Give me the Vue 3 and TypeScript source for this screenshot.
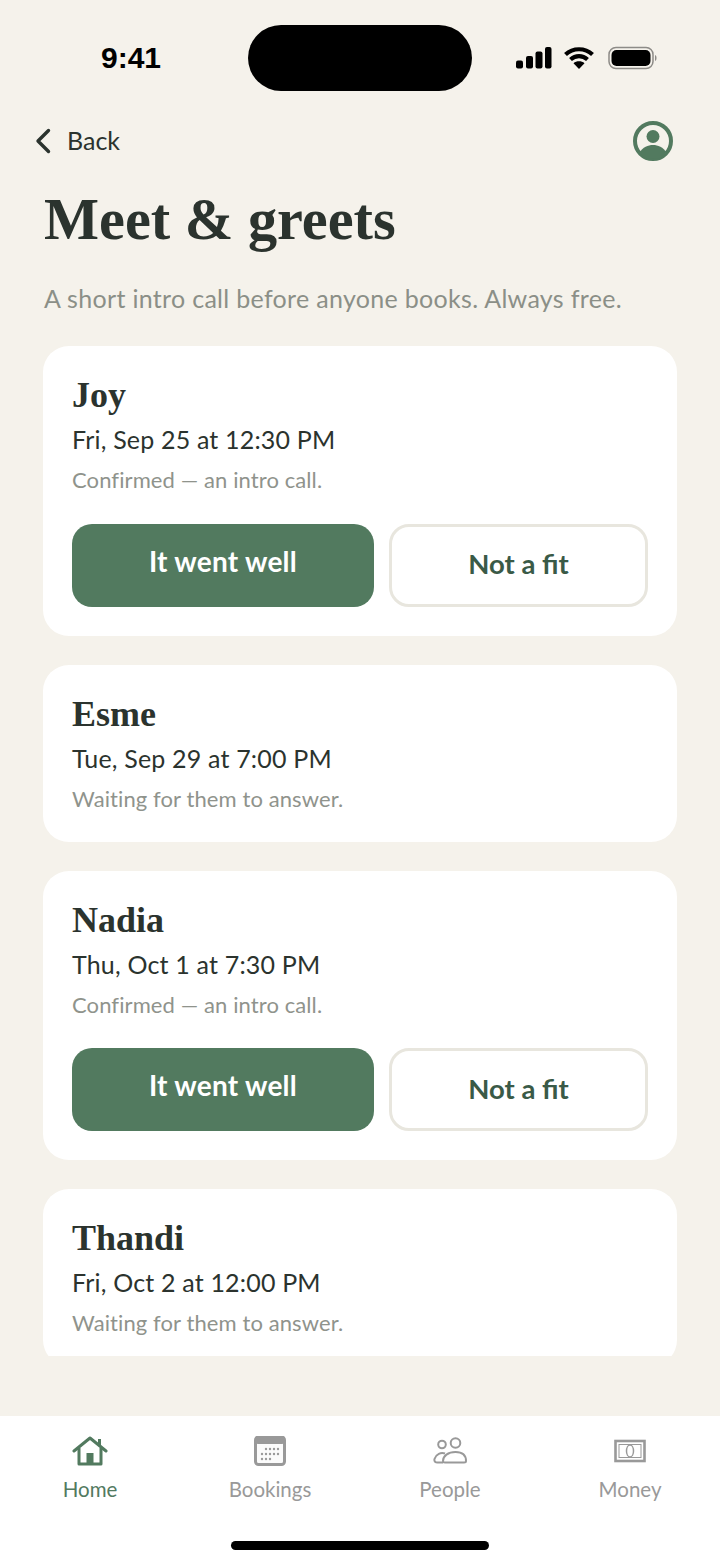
<script setup lang="ts">
interface Meet { name: string; when: string; note: string; confirmed: boolean }
const meets: Meet[] = [
  { name: 'Joy', when: 'Fri, Sep 25 at 12:30 PM', note: 'Confirmed — an intro call.', confirmed: true },
  { name: 'Esme', when: 'Tue, Sep 29 at 7:00 PM', note: 'Waiting for them to answer.', confirmed: false },
  { name: 'Nadia', when: 'Thu, Oct 1 at 7:30 PM', note: 'Confirmed — an intro call.', confirmed: true },
  { name: 'Thandi', when: 'Fri, Oct 2 at 12:00 PM', note: 'Waiting for them to answer.', confirmed: false },
]
</script>

<template>
  <div class="screen">
    <div class="status">
      <span class="time">9:41</span>
      <div class="island"></div>
      <div class="status-icons">
        <svg width="36" height="24" viewBox="0 0 36 24"><g fill="#000"><rect x="0" y="14.500" width="7" height="8" rx="2"/><rect x="10" y="10" width="7" height="12.500" rx="2"/><rect x="19.500" y="5.500" width="7" height="17" rx="2"/><rect x="29" y="1" width="6.500" height="21.500" rx="2"/></g></svg>
        <svg class="wifi" width="32" height="24" viewBox="0 0 32 24"><path d="M2.500 8.500C10 1.500 22 1.500 29.500 8.500M7.500 13.500C12.500 9 19.500 9 24.500 13.500" fill="none" stroke="#000" stroke-width="4.200"/><path d="M16 23l-5.500-5.800c3-2.600 8-2.600 11 0z" fill="#000"/></svg>
        <svg width="50" height="24" viewBox="0 0 50 24"><rect x="1" y="1.500" width="44" height="21" rx="7" fill="none" stroke="#8d8b87" stroke-width="1.500"/><rect x="3.500" y="4" width="39" height="16" rx="5" fill="#000"/><path d="M47 9c2 .5 2 5.500 0 6z" fill="#8d8b87"/></svg>
      </div>
    </div>

    <div class="topbar">
      <button class="back">
        <svg width="18" height="26" viewBox="0 0 18 26"><path d="M14.500 2.500L4 13l10.500 10.500" fill="none" stroke="#2b332e" stroke-width="3.400" stroke-linecap="round" stroke-linejoin="round"/></svg>
        <span>Back</span>
      </button>
      <svg class="avatar" width="40" height="40" viewBox="0 0 40 40">
        <circle cx="20" cy="20" r="18" fill="none" stroke="#527a5f" stroke-width="4"/>
        <circle cx="20" cy="15.500" r="6.500" fill="#527a5f"/>
        <path d="M6 32c4-6 9-8 14-8s10 2 14 8c-3.500 4-8.500 6-14 6s-10.500-2-14-6z" fill="#527a5f"/>
      </svg>
    </div>

    <h1 class="title">Meet &amp; greets</h1>
    <p class="lead">A short intro call before anyone books. Always free.</p>

    <div class="list">
      <article v-for="m in meets" :key="m.name" class="card">
        <h2 class="name">{{ m.name }}</h2>
        <p class="when">{{ m.when }}</p>
        <p class="note">{{ m.note }}</p>
        <div v-if="m.confirmed" class="actions">
          <button class="btn primary"><span>It went well</span></button>
          <button class="btn secondary">Not a fit</button>
        </div>
      </article>
    </div>

    <nav class="tabs">
      <div class="tab active">
        <svg width="36" height="30" viewBox="0 0 36 30"><path d="M2 15L18 2l16 13" fill="none" stroke="#527a5f" stroke-width="3" stroke-linecap="round" stroke-linejoin="round"/><path d="M7 12v16h22V12" fill="none" stroke="#527a5f" stroke-width="3" stroke-linejoin="round"/><rect x="14.500" y="17" width="7" height="11" fill="#527a5f"/><rect x="26" y="3" width="3" height="7" fill="#527a5f"/></svg>
        <span>Home</span>
      </div>
      <div class="tab">
        <svg width="32" height="30" viewBox="0 0 32 30"><rect x="1.500" y="1" width="29" height="27.500" rx="3" fill="#fbfbfb" stroke="#999" stroke-width="3"/><rect x="1" y="1" width="30" height="7" rx="3" fill="#999"/><g fill="#999"><circle cx="12" cy="13" r="1.200"/><circle cx="16" cy="13" r="1.200"/><circle cx="20" cy="13" r="1.200"/><circle cx="24" cy="13" r="1.200"/><circle cx="8" cy="18" r="1.200"/><circle cx="12" cy="18" r="1.200"/><circle cx="16" cy="18" r="1.200"/><circle cx="20" cy="18" r="1.200"/><circle cx="24" cy="18" r="1.200"/><circle cx="8" cy="23" r="1.200"/><circle cx="12" cy="23" r="1.200"/><circle cx="16" cy="23" r="1.200"/></g></svg>
        <span>Bookings</span>
      </div>
      <div class="tab">
        <svg width="34" height="30" viewBox="0 0 34 30"><g fill="none" stroke="#999" stroke-width="2"><circle cx="9" cy="8.500" r="3.800"/><circle cx="22.500" cy="7" r="4.800"/><path d="M12 17.500C8 16 3 18 1.500 23c-.6 2.500 1 3.500 3 3.500H10"/><path d="M10 25c0-5 5-9 12.500-9S33 20 33 25c0 1-.7 1.500-2 1.500H12c-1.300 0-2-.5-2-1.500z"/></g></svg>
        <span>People</span>
      </div>
      <div class="tab">
        <svg width="32" height="30" viewBox="0 0 32 30"><rect x="1.500" y="5" width="29" height="20" fill="none" stroke="#999" stroke-width="2.600"/><rect x="5" y="8.500" width="22" height="13" fill="none" stroke="#999" stroke-width="1"/><ellipse cx="16" cy="15" rx="3.500" ry="6" fill="none" stroke="#999" stroke-width="1.500"/></svg>
        <span>Money</span>
      </div>
    </nav>
    <div class="indicator-row"><div class="indicator"></div></div>
  </div>
</template>

<style>
html, body { margin: 0; background: #f5f2eb; }
</style>

<style scoped>
.screen {
  width: 720px;
  height: 1565px;
  display: flex;
  flex-direction: column;
  background: #f5f2eb;
  color: #2b332e;
  font-family: "Lato", "Noto Sans", sans-serif;
  overflow: hidden;
}
.status {
  height: 66px;
  margin-top: 25px;
  display: flex;
  align-items: center;
  flex: none;
}
.time {
  width: 248px;
  padding-left: 101px;
  box-sizing: border-box;
  font: 700 30px/1 "Liberation Sans", sans-serif;
  color: #000;
}
.island {
  width: 224px;
  height: 66px;
  border-radius: 33px;
  background: #000;
  flex: none;
}
.status-icons {
  display: flex;
  align-items: center;
  gap: 12px;
  margin-left: 44px;
  margin-top: -1px;
}
.wifi { margin-left: -1px; margin-right: 1px; }
.topbar {
  height: 40px;
  margin-top: 30px;
  padding: 0 47px 0 34px;
  display: flex;
  justify-content: space-between;
  align-items: center;
  flex: none;
}
.back {
  display: flex;
  align-items: center;
  gap: 15px;
  border: 0;
  padding: 0;
  background: none;
  color: #2b332e;
  font: 400 25px/1 "Lato", sans-serif;
}
.back span { margin-top: -2px; }
.title {
  margin: 24px 0 0 44px;
  font: 700 58.3px/70px "Liberation Serif", serif;
  color: #2b332e;
  flex: none;
}
.lead {
  margin: 26px 0 0 44px;
  font-size: 25px;
  line-height: 34px;
  letter-spacing: .31px;
  color: #8b8f87;
  flex: none;
}
.list {
  height: 1010px;
  margin: 31px 43px 0;
  display: flex;
  flex-direction: column;
  gap: 29px;
  overflow: hidden;
  flex: none;
}
.card {
  background: #fff;
  border-radius: 26px;
  padding: 29px;
  flex: none;
}
.name {
  margin: 0;
  font: 700 36px/40px "Liberation Serif", serif;
  color: #2b332e;
}
.when {
  margin: 9px 0 0;
  font-size: 25px;
  line-height: 30px;
  letter-spacing: .18px;
  color: #2b332e;
}
.note {
  margin: 12px 0 0;
  font-size: 22px;
  line-height: 28px;
  letter-spacing: .1px;
  color: #8f938c;
}
.actions {
  display: flex;
  gap: 15px;
  margin-top: 29.5px;
}
.btn {
  height: 83px;
  border-radius: 20px;
  font: 700 28px/1 "Lato", sans-serif;
  box-sizing: border-box;
  padding: 0 0 4px;
}
.primary {
  width: 302px;
  border: 0;
  background: #527a5f;
  color: #fff;
  letter-spacing: .25px;
}
.primary span { display: block; margin-top: -5px; }
.secondary {
  flex: 1;
  border: 3px solid #e8e6de;
  background: #fff;
  color: #3a5a47;
  font-size: 27.5px;
  padding-bottom: 2px;
}
.tabs {
  margin-top: 60px;
  height: 125px;
  background: #fff;
  display: grid;
  grid-template-columns: repeat(4, 180px);
  flex: none;
}
.tab {
  display: flex;
  flex-direction: column;
  align-items: center;
  padding-top: 20px;
  gap: 10px;
  color: #999;
  font-size: 20.5px;
  line-height: 26px;
}
.tab.active { color: #527a5f; }
.indicator-row {
  flex: 1;
  background: #fff;
  display: flex;
  justify-content: center;
}
.indicator {
  width: 258px;
  height: 9px;
  border-radius: 5px;
  background: #000;
}
</style>
